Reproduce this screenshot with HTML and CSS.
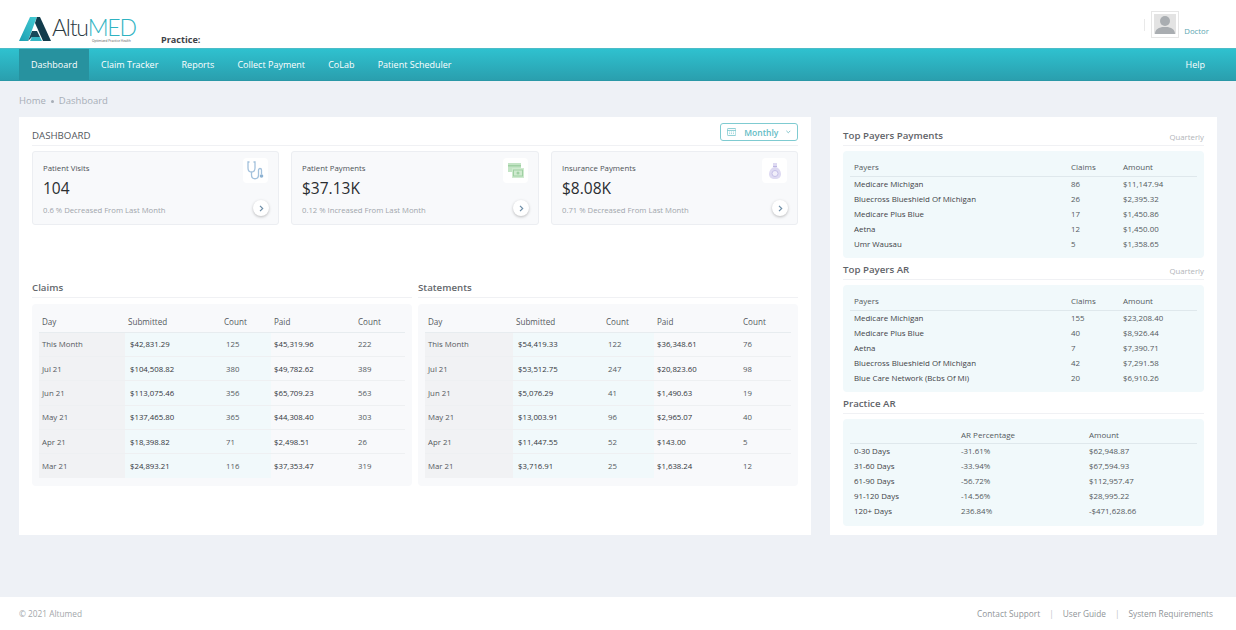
FILE: index.html
```html
<!DOCTYPE html>
<html lang="en">
<head>
<meta charset="utf-8">
<title>AltuMED Dashboard</title>
<link rel="stylesheet" href="styles.css">
</head>
<body>
<header class="top">
  <div class="logo">
    <svg class="logo-mark" viewBox="0 0 32 25" width="32" height="25">
      <defs><linearGradient id="lg" x1="0" y1="1" x2="1" y2="0"><stop offset="0" stop-color="#1b9fb2"/><stop offset="1" stop-color="#45ccd4"/></linearGradient></defs>
      <polygon points="0,24 11,0 18,0 16,5 9,24" fill="url(#lg)"/>
      <polygon points="18,0 21,0 32,24 24,24 16,6" fill="#123c4c"/>
      <polygon points="9,24 13,14 18,14 21,20 13,20" fill="#17495a"/>
      <polygon points="13,20 21,20 23,24 11,24" fill="#35b6c4"/>
    </svg>
    <div class="logo-text">
      <div class="logo-name">Altu<span class="logo-med">MED</span></div>
      <div class="logo-tag">Optimized Practice Health</div>
    </div>
  </div>
  <div class="practice">Practice:</div>
  <div class="user">
    <span class="user-div"></span>
    <span class="avatar">
      <svg viewBox="0 0 22 20" width="22" height="20"><rect width="22" height="20" fill="#e3e3e3"/><circle cx="11" cy="7" r="5" fill="#a9adb1"/><path d="M1 20c0-5 4-6 7-7h6c3 1 7 2 7 7z" fill="#a9adb1"/></svg>
    </span>
    <span class="doctor">Doctor</span>
  </div>
</header>
<nav class="nav">
  <a class="nav-item active">Dashboard</a>
  <a class="nav-item">Claim Tracker</a>
  <a class="nav-item">Reports</a>
  <a class="nav-item">Collect Payment</a>
  <a class="nav-item">CoLab</a>
  <a class="nav-item">Patient Scheduler</a>
  <a class="nav-item help">Help</a>
</nav>
<main class="main">
  <div class="crumbs"><span>Home</span><i class="dot"></i><span>Dashboard</span></div>
  <div class="cols">
    <section class="card">
      <div class="dash-head">
        <h1 class="dash-title">DASHBOARD</h1>
        <button class="range">
          <svg viewBox="0 0 12 10" width="12" height="10" fill="none" stroke="#6fc2c9" stroke-width="1"><rect x=".5" y=".5" width="11" height="9" rx="1"/><path d="M.5 3h11M3 5h1M5.500 5h1M8 5h1M3 7h1M5.500 7h1M8 7h1"/></svg>
          <span>Monthly</span>
          <svg viewBox="0 0 6 4" width="6" height="4" fill="none" stroke="#5fb4bc" stroke-width="1"><path d="M.5.500 3 3 5.500.500"/></svg>
        </button>
      </div>
      <div class="stats">
        <div class="stat">
          <div>
            <div class="stat-label">Patient Visits</div>
            <div class="stat-value">104</div>
            <div class="stat-note">0.6 % Decreased From Last Month</div>
          </div>
          <div class="stat-side">
            <span class="stat-icon"><svg viewBox="0 0 18 20" width="18" height="20" fill="none" stroke="#a3c1dc" stroke-width="1.300"><path d="M2.500 1H1v6c0 3 2 4 3.500 4S8 10 8 7V1H6.500"/><path d="M4.500 11v3c0 5 7 5 7 0V9c0-2 3-2 3 0v4"/><circle cx="14.500" cy="15" r="1.800" fill="#8db2d2" stroke="none"/></svg></span>
            <span class="go"><svg viewBox="0 0 5 7" width="5" height="7" fill="none" stroke="#6e8ea8" stroke-width="1.200"><path d="M1 .8 3.700 3.500 1 6.200"/></svg></span>
          </div>
        </div>
        <div class="stat">
          <div>
            <div class="stat-label">Patient Payments</div>
            <div class="stat-value">$37.13K</div>
            <div class="stat-note">0.12 % Increased From Last Month</div>
          </div>
          <div class="stat-side">
            <span class="stat-icon"><svg viewBox="0 0 16 15" width="16" height="15"><rect x="0" y="0" width="13" height="9" fill="#c3e4c5"/><rect x="0" y="2" width="13" height="1.500" fill="#9fd0a3"/><rect x="4" y="5" width="12" height="10" fill="#cfeacf"/><rect x="5.500" y="7" width="9" height="6" fill="none" stroke="#9fd0a3"/><circle cx="10" cy="10" r="1.500" fill="#9fd0a3"/></svg></span>
            <span class="go"><svg viewBox="0 0 5 7" width="5" height="7" fill="none" stroke="#6e8ea8" stroke-width="1.200"><path d="M1 .8 3.700 3.500 1 6.200"/></svg></span>
          </div>
        </div>
        <div class="stat">
          <div>
            <div class="stat-label">Insurance Payments</div>
            <div class="stat-value">$8.08K</div>
            <div class="stat-note">0.71 % Decreased From Last Month</div>
          </div>
          <div class="stat-side">
            <span class="stat-icon"><svg viewBox="0 0 12 16" width="12" height="16"><path d="M4 0h4v3l-1 1c3 1 5 4 5 7 0 3-2 5-6 5s-6-2-6-5c0-3 2-6 5-7L4 3z" fill="#dedaf2"/><circle cx="6" cy="10.500" r="3" fill="#f1effa" stroke="#bdb6e3" stroke-width=".8"/><path d="M4 3.500h4" stroke="#bdb6e3"/></svg></span>
            <span class="go"><svg viewBox="0 0 5 7" width="5" height="7" fill="none" stroke="#6e8ea8" stroke-width="1.200"><path d="M1 .8 3.700 3.500 1 6.200"/></svg></span>
          </div>
        </div>
      </div>
      <div class="reports">
        <div>
          <h2 class="sec-title">Claims</h2>
          <div class="box">
            <table class="grid-table claims">
              <colgroup><col class="c1"><col class="c2"><col class="c3"><col class="c4"><col class="c5"></colgroup>
              <thead><tr><th>Day</th><th>Submitted</th><th>Count</th><th>Paid</th><th>Count</th></tr></thead>
              <tbody>
                <tr><td>This Month</td><td>$42,831.29</td><td>125</td><td>$45,319.96</td><td>222</td></tr>
                <tr><td>Jul 21</td><td>$104,508.82</td><td>380</td><td>$49,782.62</td><td>389</td></tr>
                <tr><td>Jun 21</td><td>$113,075.46</td><td>356</td><td>$65,709.23</td><td>563</td></tr>
                <tr><td>May 21</td><td>$137,465.80</td><td>365</td><td>$44,308.40</td><td>303</td></tr>
                <tr><td>Apr 21</td><td>$18,398.82</td><td>71</td><td>$2,498.51</td><td>26</td></tr>
                <tr><td>Mar 21</td><td>$24,893.21</td><td>116</td><td>$37,353.47</td><td>319</td></tr>
              </tbody>
            </table>
          </div>
        </div>
        <div>
          <h2 class="sec-title">Statements</h2>
          <div class="box">
            <table class="grid-table statements">
              <colgroup><col class="c1"><col class="c2"><col class="c3"><col class="c4"><col class="c5"></colgroup>
              <thead><tr><th>Day</th><th>Submitted</th><th>Count</th><th>Paid</th><th>Count</th></tr></thead>
              <tbody>
                <tr><td>This Month</td><td>$54,419.33</td><td>122</td><td>$36,348.61</td><td>76</td></tr>
                <tr><td>Jul 21</td><td>$53,512.75</td><td>247</td><td>$20,823.60</td><td>98</td></tr>
                <tr><td>Jun 21</td><td>$5,076.29</td><td>41</td><td>$1,490.63</td><td>19</td></tr>
                <tr><td>May 21</td><td>$13,003.91</td><td>96</td><td>$2,965.07</td><td>40</td></tr>
                <tr><td>Apr 21</td><td>$11,447.55</td><td>52</td><td>$143.00</td><td>5</td></tr>
                <tr><td>Mar 21</td><td>$3,716.91</td><td>25</td><td>$1,638.24</td><td>12</td></tr>
              </tbody>
            </table>
          </div>
        </div>
      </div>
    </section>
    <aside class="card side">
      <div class="side-head"><h2 class="side-title">Top Payers Payments</h2><span class="period">Quarterly</span></div>
      <div class="mini">
        <table class="mini-table payers">
          <colgroup><col class="m1"><col class="m2"><col class="m3"></colgroup>
          <thead><tr><th>Payers</th><th>Claims</th><th>Amount</th></tr></thead>
          <tbody>
            <tr><td>Medicare Michigan</td><td>86</td><td>$11,147.94</td></tr>
            <tr><td>Bluecross Blueshield Of Michigan</td><td>26</td><td>$2,395.32</td></tr>
            <tr><td>Medicare Plus Blue</td><td>17</td><td>$1,450.86</td></tr>
            <tr><td>Aetna</td><td>12</td><td>$1,450.00</td></tr>
            <tr><td>Umr Wausau</td><td>5</td><td>$1,358.65</td></tr>
          </tbody>
        </table>
      </div>
      <div class="side-head next"><h2 class="side-title">Top Payers AR</h2><span class="period">Quarterly</span></div>
      <div class="mini">
        <table class="mini-table payers">
          <colgroup><col class="m1"><col class="m2"><col class="m3"></colgroup>
          <thead><tr><th>Payers</th><th>Claims</th><th>Amount</th></tr></thead>
          <tbody>
            <tr><td>Medicare Michigan</td><td>155</td><td>$23,208.40</td></tr>
            <tr><td>Medicare Plus Blue</td><td>40</td><td>$8,926.44</td></tr>
            <tr><td>Aetna</td><td>7</td><td>$7,390.71</td></tr>
            <tr><td>Bluecross Blueshield Of Michigan</td><td>42</td><td>$7,291.58</td></tr>
            <tr><td>Blue Care Network (Bcbs Of Mi)</td><td>20</td><td>$6,910.26</td></tr>
          </tbody>
        </table>
      </div>
      <div class="side-head next"><h2 class="side-title">Practice AR</h2></div>
      <div class="mini">
        <table class="mini-table practice-ar">
          <colgroup><col class="p1"><col class="p2"><col class="p3"></colgroup>
          <thead><tr><th></th><th>AR Percentage</th><th>Amount</th></tr></thead>
          <tbody>
            <tr><td>0-30 Days</td><td>-31.61%</td><td>$62,948.87</td></tr>
            <tr><td>31-60 Days</td><td>-33.94%</td><td>$67,594.93</td></tr>
            <tr><td>61-90 Days</td><td>-56.72%</td><td>$112,957.47</td></tr>
            <tr><td>91-120 Days</td><td>-14.56%</td><td>$28,995.22</td></tr>
            <tr><td>120+ Days</td><td>236.84%</td><td>-$471,628.66</td></tr>
          </tbody>
        </table>
      </div>
    </aside>
  </div>
</main>
<footer class="foot">
  <span>© 2021 Altumed</span>
  <div class="foot-links"><a>Contact Support</a><i>|</i><a>User Guide</a><i>|</i><a>System Requirements</a></div>
</footer>
</body>
</html>
```
FILE: styles.css
```css
* { box-sizing: border-box; }
html, body { height: 100%; }
body {
  margin: 0;
  min-height: 630px;
  display: flex;
  flex-direction: column;
  background: #eef1f6;
  color: #3f4347;
  font-family: "Open Sans", "Liberation Sans", sans-serif;
  font-size: 8px;
}
h1, h2 { margin: 0; font-weight: 600; }

.top {
  height: 48px;
  flex: none;
  display: flex;
  align-items: flex-start;
  background: #fff;
  padding: 0 27px 0 19px;
}
.logo { display: flex; align-items: flex-start; gap: 1px; padding-top: 17px; width: 142px; }
.logo-mark { flex: none; }
.logo-text { display: flex; flex-direction: column; }
.logo-name {
  font-family: Lato, "Open Sans", sans-serif;
  font-weight: 300;
  font-size: 23px;
  line-height: 21px;
  letter-spacing: -1.200px;
  color: #2b3a42;
  white-space: nowrap;
}
.logo-med { color: #2fb3c2; }
.logo-tag { font-size: 3.200px; line-height: 4px; margin: 1px 0 0 40px; color: #555; white-space: nowrap; }
.practice { font-size: 9.100px; font-weight: 700; color: #3d4247; line-height: 13px; margin-top: 33px; }
.user { margin-left: auto; display: flex; align-items: flex-start; }
.user-div { width: 1px; height: 12px; background: #e9e9e9; margin: 19px 6px 0 0; }
.avatar {
  width: 28px; height: 27px; margin-top: 11px;
  border: 1px solid #e6e6e6;
  padding: 2px;
  display: flex;
  background: #fff;
}
.doctor { color: #5da6b0; font-size: 7.800px; line-height: 12px; margin: 25px 0 0 5px; }

.nav {
  height: 33px;
  flex: none;
  display: flex;
  padding: 0 19px;
  border-top: 1px solid #4bbcc8;
  border-bottom: 1px solid #2a98a7;
  background: linear-gradient(#2fc1cf, #2a9fae);
}
.nav-item {
  display: flex;
  align-items: center;
  padding: 0 11.600px;
  color: #fff;
  font-size: 9px;
  font-weight: 500;
  white-space: nowrap;
}
.nav-item.active { background: #27929f; padding: 0 12px; }
.nav-item.help { margin-left: auto; padding-right: 12px; }

.main { flex: 1; padding: 0 19px 62px; display: flex; flex-direction: column; }
.crumbs {
  height: 36px;
  flex: none;
  display: flex;
  align-items: center;
  gap: 5px;
  padding-top: 3px;
  color: #a7aeb7;
  font-size: 9.500px;
}
.dot { width: 3px; height: 3px; border-radius: 50%; background: #a7aeb7; margin-top: 2px; }
.cols { display: grid; grid-template-columns: 792px 1fr; gap: 19px; height: 418px; }
.card { background: #fff; padding: 0 13px; }

.dash-head {
  height: 29px;
  display: flex;
  justify-content: space-between;
  padding-top: 7px;
  border-bottom: 1px solid #f0f1f4;
}
.dash-title { font-size: 9.700px; line-height: 24px; font-weight: 500; color: #53575c; }
.range {
  height: 18px;
  width: 78px;
  margin-top: -1px;
  display: flex;
  align-items: center;
  padding: 0 6px;
  background: #fff;
  border: 1px solid #7fcbd1;
  border-radius: 3px;
  color: #63bcc5;
  font: 600 8.500px "Open Sans", sans-serif;
}
.range span { margin: 0 8px; }

.stats { display: grid; grid-template-columns: 247px 248px 247px; gap: 12px; margin-top: 5px; }
.stat {
  height: 74px;
  display: flex;
  justify-content: space-between;
  padding: 10px 10px 8px 10px;
  background: #f8f9fb;
  border: 1px solid #eceef2;
  border-radius: 3px;
}
.stat-label { font-size: 7.800px; font-weight: 500; color: #4d5156; line-height: 12px; }
.stat-value { font-size: 15.500px; font-weight: 400; color: #2a2d30; line-height: 22px; margin-top: 3px; }
.stat-note { font-size: 7.700px; color: #a0a5ab; line-height: 12px; margin-top: 5px; }
.stat-side { display: flex; flex-direction: column; align-items: flex-end; justify-content: space-between; margin-top: -4px; }
.stat-icon {
  width: 25px; height: 25px;
  display: flex; align-items: center; justify-content: center;
  background: #fff;
  border-radius: 4px;
}
.go {
  width: 16px; height: 16px;
  display: flex; align-items: center; justify-content: center;
  background: #fff;
  border-radius: 50%;
  box-shadow: 0 1px 3px rgba(0,0,0,.25);
  margin-right: -1px;
}

.reports { display: grid; grid-template-columns: 380px 380px; gap: 6px; margin-top: 53px; }
.sec-title {
  height: 20px;
  padding-top: 1px;
  font-size: 9.700px;
  line-height: 18px;
  color: #63676c;
  border-bottom: 1px solid #f0f1f4;
}
.box {
  margin-top: 6px;
  height: 182px;
  padding: 7px;
  background: #f8f9fb;
  border-radius: 4px;
}
.grid-table { width: 366px; border-collapse: collapse; table-layout: fixed; font-size: 7.800px; }
.grid-table th {
  height: 21px;
  padding: 0 3px;
  text-align: left;
  font-size: 8.100px;
  font-weight: 500;
  color: #55595e;
  border-bottom: 1px solid #e7ecef;
}
.grid-table td {
  height: 24.400px;
  padding: 0 3px;
  color: #55595e;
  border-top: 1px solid #eef0f2;
}
.grid-table tr:first-child td { border-top: 0; }
.grid-table td:nth-child(1) { background: #f1f2f4; }
.grid-table td:nth-child(2) { background: #f1f9fb; padding-left: 5px; color: #33373b; font-size: 7.800px; font-weight: 500; }
.grid-table td:nth-child(3) { background: #f1f9fb; padding-left: 5px; }
.grid-table td:nth-child(4) { color: #33373b; font-size: 7.800px; font-weight: 500; }
.claims .c1 { width: 86px; }
.claims .c2 { width: 96px; }
.claims .c3 { width: 50px; }
.claims .c4 { width: 84px; }
.claims .c5 { width: 50px; }
.statements .c1 { width: 88px; }
.statements .c2 { width: 90px; }
.statements .c3 { width: 51px; }
.statements .c4 { width: 86px; }
.statements .c5 { width: 51px; }

.side-head {
  height: 29px;
  display: flex;
  justify-content: space-between;
  align-items: flex-end;
  border-bottom: 1px solid #f0f1f4;
}
.side-head.next { height: 22px; }
.side-title { font-size: 9.700px; line-height: 18px; color: #5f6368; }
.period { font-size: 7.800px; color: #b2b5b9; line-height: 12px; margin-bottom: 2px; }
.mini {
  margin-top: 5px;
  height: 107px;
  padding: 7px 7px 0;
  background: #f1f9fb;
  border-radius: 4px;
}
.mini-table { width: 347px; border-collapse: collapse; table-layout: fixed; font-size: 7.900px; }
.mini-table th {
  height: 18px;
  padding: 0 4px;
  text-align: left;
  font-size: 8px;
  font-weight: 500;
  color: #55595e;
  border-bottom: 1px solid #dfe8ec;
}
.mini-table td { height: 15px; padding: 0 4px; color: #55595e; }
.mini-table td:first-child { color: #3f4347; font-size: 7.900px; font-weight: 500; }
.practice-ar th { height: 17px; }
.m1 { width: 217px; }
.m2 { width: 52px; }
.m3 { width: 78px; }
.p1 { width: 107px; }
.p2 { width: 128px; }
.p3 { width: 112px; }

.foot {
  height: 33px;
  flex: none;
  display: flex;
  justify-content: space-between;
  align-items: center;
  padding: 0 23px 0 19px;
  background: #fff;
  color: #a3a7ab;
  font-size: 8.300px;
}
.foot-links { display: flex; gap: 9px; color: #8f9498; }
.foot-links i { font-style: normal; color: #c0c3c6; }
```
